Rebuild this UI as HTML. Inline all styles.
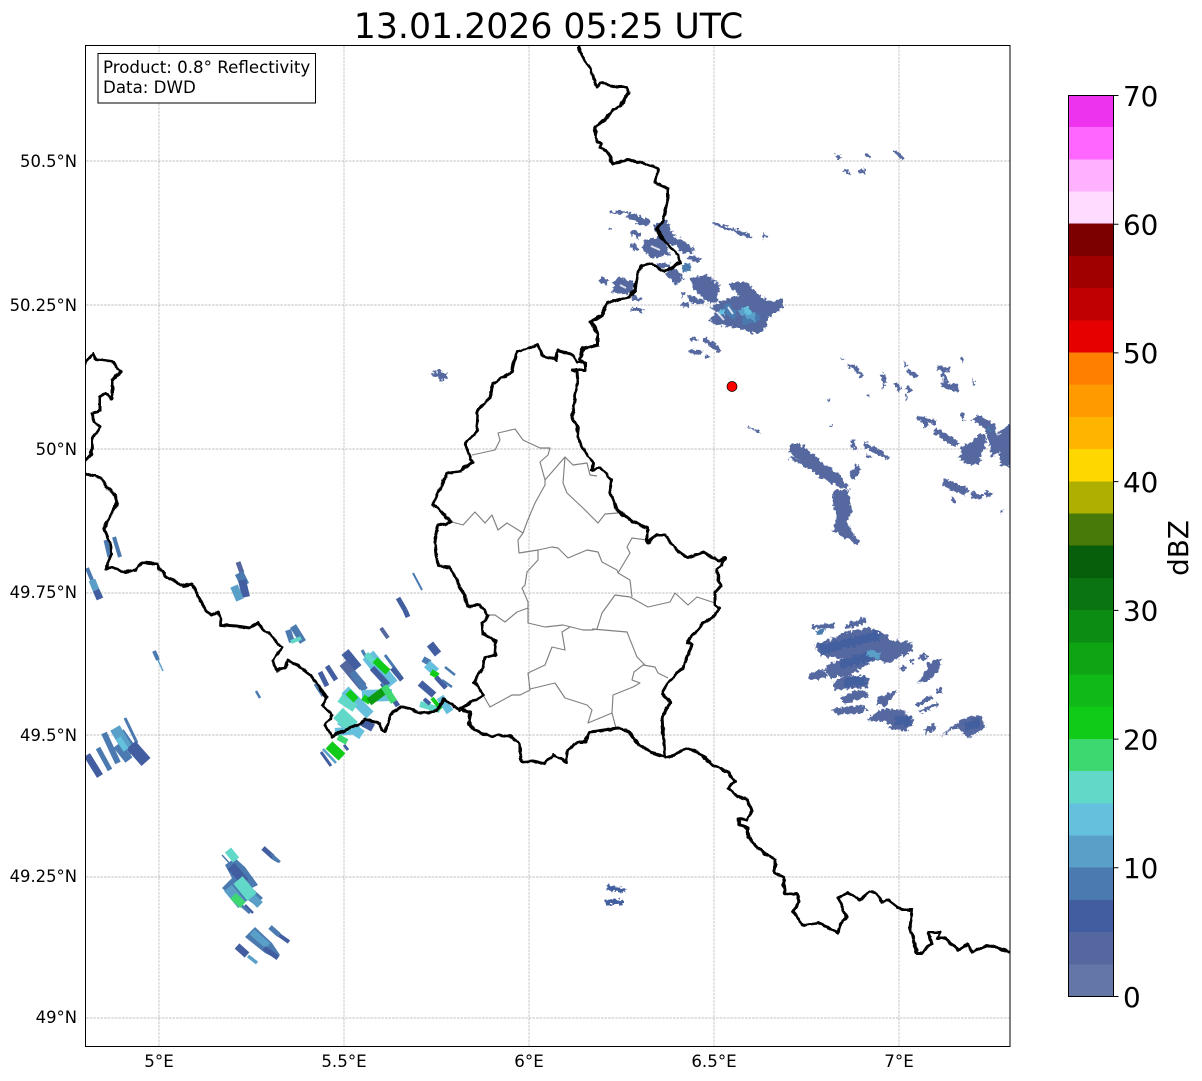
<!DOCTYPE html>
<html><head><meta charset="utf-8"><style>
html,body{margin:0;padding:0;background:#fff;width:1202px;height:1081px;overflow:hidden}
svg{display:block}
text{font-family:"DejaVu Sans",sans-serif;fill:#000}
.m{font-size:16.67px}
.y{font-size:16.4px}
.c{font-size:27.8px}
.r path{fill:none}
.p polygon{stroke:none}
</style></head><body>
<svg width="1202" height="1081" viewBox="0 0 1202 1081" xmlns="http://www.w3.org/2000/svg">
<defs>
<clipPath id="ax"><rect x="85.5" y="45.5" width="924.5" height="1001"/></clipPath>
<filter id="grain" filterUnits="userSpaceOnUse" x="0" y="0" width="1202" height="1081">
<feTurbulence type="fractalNoise" baseFrequency="0.3" numOctaves="2" seed="4" result="n"/>
<feDisplacementMap in="SourceGraphic" in2="n" scale="7" xChannelSelector="R" yChannelSelector="G"/>
</filter>
<filter id="wig" filterUnits="userSpaceOnUse" x="0" y="0" width="1202" height="1081">
<feTurbulence type="fractalNoise" baseFrequency="0.12" numOctaves="2" seed="7" result="n"/>
<feDisplacementMap in="SourceGraphic" in2="n" scale="4" xChannelSelector="R" yChannelSelector="G"/>
</filter>
</defs>
<rect width="1202" height="1081" fill="#fff"/>
<text x="548.5" y="38" text-anchor="middle" font-size="34.7">13.01.2026 05:25 UTC</text>

<g stroke="#b0b0b0" stroke-width=".7" stroke-dasharray="2.6 1" fill="none">
<path d="M159 46V1046M344 46V1046M529 46V1046M714 46V1046M899 46V1046M86 161H1010M86 305H1010M86 449H1010M86 593H1010M86 735H1010M86 877H1010M86 1018H1010"/>
</g>

<g clip-path="url(#ax)">

<!-- grainy eastern echoes -->
<g filter="url(#grain)">
<g class="p" fill="#54689f">
<polygon points="730,282 747,282 757,293 770,302 783,298 783,308 767,318 767,328 757,334 737,328 713,324 709,320 717,312 710,308 720,302 730,298 740,295 730,288"/>
<polygon points="690,278 707,275 720,285 717,302 707,302 693,288"/>
<polygon points="653,225 667,220 673,235 693,247 695,252 687,253 680,253 678,245 667,245 670,255 650,258 642,248 645,240 658,237"/>
<polygon points="612,282 620,277 633,282 635,293 628,293 615,292"/>
<polygon points="833,490 848,490 852,510 847,523 853,532 852,538 843,538 833,530 837,517 833,507"/>
<polygon points="790,445 800,443 823,463 840,475 850,490 835,485 820,477 790,453"/>
<polygon points="990,422 995,425 997,450 992,457 988,437 983,427 972,420 978,415"/>
<polygon points="992,437 1012,423 1012,467 1000,465 1000,453 992,457"/>
<polygon points="958,457 967,445 982,433 987,440 978,465 967,465"/>
<polygon points="815,645 833,638 845,632 870,628 887,635 888,640 912,642 913,650 890,663 870,660 843,658 828,658 818,652"/>
<polygon points="827,665 847,658 870,663 850,675 830,678 825,672"/>
<polygon points="808,675 823,668 827,678 810,680"/>
<polygon points="833,683 845,675 870,678 867,687 835,690"/>
<polygon points="840,698 858,690 868,692 868,697 845,704"/>
<polygon points="878,697 898,690 885,707 878,705"/>
<polygon points="830,710 858,705 868,708 863,713 840,715"/>
<polygon points="867,720 883,708 902,710 915,720 907,730 892,730 887,722"/>
<polygon points="940,737 963,718 980,715 986,727 968,738 958,727"/>
<polygon points="917,683 928,670 927,663 942,658 938,672 930,680"/>
</g>
<g class="r">
<g stroke="#54689f">
<path stroke-width="3" d="M610 213L627 212M609 228L612 228M712 223L750 236M742 233L752 238M836 156L842 158M866 155L870 157M895 151L904 160M845 170L850 175M858 172L866 171"/>
<path stroke-width="7" d="M627 215L650 224"/>
<path stroke-width="5" d="M632 232L640 236M632 245L637 250M600 279L608 283M632 297L641 300M762 238L766 235"/>
<path stroke-width="4" d="M688 257L700 260M632 308L643 311M680 304L688 305M682 294L685 295M690 351L702 353"/>
<path stroke-width="5" d="M657 266L670 266"/>
<path stroke-width="11" d="M670 270L680 282"/>
<path stroke-width="6" d="M613 290L628 292M688 298L703 303"/>
<path stroke-width="3" d="M690 338L698 341M706 356L709 358"/>
<path stroke-width="5" d="M704 339L720 351"/>
<path stroke-width="2.5" d="M841 358L845 361M848 365L852 367M867 395L869 396M828 400L830 401M829 425L832 426"/>
<path stroke-width="4" d="M853 365L862 377M882 373L885 383M895 383L900 390M907 387L910 392M907 370L917 377M937 367L950 370M943 370L946 383M917 418L936 422M852 440L855 450M966 445L962 453"/>
<path stroke-width="6" d="M942 385L958 388"/>
<path stroke-width="2" d="M962 357L963 363M972 378L974 385M905 362L906 366M883 389L885 384M906 394L907 401M748 427L760 432"/>
<path stroke-width="5" d="M865 445L888 458M923 417L927 427M972 495L982 497M985 493L992 496"/>
<path stroke-width="3" d="M866 455L872 458M952 497L955 503M1001 510L1002 512"/>
<path stroke-width="7" d="M851 477L860 467"/>
<path stroke-width="3" d="M790 457L808 467"/>
<path stroke-width="5" d="M852 537L858 543"/>
<path stroke-width="6" d="M935 430L957 445"/>
<path stroke-width="4" d="M962 413L964 420"/>
<path stroke-width="8" d="M943 482L967 492"/>
<path stroke-width="4" d="M812 627L835 625M917 705L932 697M910 662L914 660M900 669L905 667"/>
<path stroke-width="5" d="M846 627L866 620M936 692L942 690M924 733L935 725"/>
<path stroke-width="3" d="M920 712L937 704"/>
<path stroke-width="6" d="M920 660L926 655"/>
</g>
<path stroke="#425ea0" stroke-width="9" d="M820 650L880 635M840 664L872 656M845 683L866 680M895 720L910 722M965 727L980 722"/>
<path stroke="#4a7ab0" stroke-width="8" d="M682 268L690 267M725 305L735 318M742 322L760 316"/>
<path stroke="#4a7ab0" stroke-width="4" d="M817 633L825 630M988 427L992 432"/>
<path stroke="#5a9fc8" stroke-width="7" d="M867 653L880 656M740 310L755 318"/>
<path stroke="#65c0de" stroke-width="5" d="M718 313L724 312M745 308L750 314"/>
<path stroke="#54689f" stroke-width="5" d="M433 374L447 376"/>
<path stroke="#54689f" stroke-width="4" d="M439 369L442 382"/>
<path stroke="#425ea0" stroke-width="5" d="M607 887L626 891M605 902L623 902"/>
</g>
</g>

<!-- white holes -->
<g stroke="#fff" stroke-width="2" fill="none" opacity=".8">
<path d="M717 312L724 320M728 307L733 314M651 246L660 250M620 285L626 288M655 232L659 236"/>
</g>

<g class="r" stroke-linecap="butt">
<!-- left strips -->
<path stroke="#4a7ab0" stroke-width="5" d="M106 540L110 557"/>
<path stroke="#4a7ab0" stroke-width="4" d="M114 537L120 557"/>
<path stroke="#4a7ab0" stroke-width="4" d="M87 568L92 580"/>
<path stroke="#5a9fc8" stroke-width="7" d="M92 580L96 590"/>
<path stroke="#425ea0" stroke-width="7" d="M96 590L100 599"/>
<path stroke="#54689f" stroke-width="5" d="M238 562L242 573"/>
<path stroke="#4a7ab0" stroke-width="9" d="M239 573L245 585"/>
<path stroke="#425ea0" stroke-width="8" d="M242 580L246 597"/>
<path stroke="#5a9fc8" stroke-width="8" d="M234 586L240 600"/>
<path stroke="#4a7ab0" stroke-width="6" d="M288 630L292 642"/>
<path stroke="#4a7ab0" stroke-width="7" d="M293 626L303 642"/>
<path stroke="#62d8c8" stroke-width="4" d="M291 642L301 638"/>
<path stroke="#4a7ab0" stroke-width="4" d="M154 651L158 660"/>
<path stroke="#5a9fc8" stroke-width="1.5" d="M158 660L163 671"/>
<path stroke="#4a7ab0" stroke-width="2.5" d="M256 691L260 698"/>
<path stroke="#4a7ab0" stroke-width="2" d="M413 573L422 590"/>
<path stroke="#425ea0" stroke-width="5" d="M398 598L405 610M405 610L408 617"/>
<path stroke="#54689f" stroke-width="4" d="M381 628L388 638"/>

<!-- SW cell -->
<path stroke="#4a7ab0" stroke-width="3" d="M125 718L137 743"/>
<path stroke="#4a7ab0" stroke-width="6" d="M104 733L118 763"/>
<path stroke="#4a7ab0" stroke-width="5" d="M98 748L110 770"/>
<path stroke="#425ea0" stroke-width="7" d="M87 755L100 776"/>
<path stroke="#4a7ab0" stroke-width="9" d="M120 732L134 752"/>
<path stroke="#5a9fc8" stroke-width="11" d="M115 728L128 750"/>
<path stroke="#425ea0" stroke-width="12" d="M131 745L146 762"/>
<path stroke="#4a7ab0" stroke-width="9" d="M117 745L129 760"/>
<path stroke="#65c0de" stroke-width="6" d="M118 738L126 750"/>

<!-- Central cluster -->
<path stroke="#425ea0" stroke-width="9" d="M345 652L358 668"/>
<path stroke="#54689f" stroke-width="9" d="M343 663L363 687"/>
<path stroke="#4a7ab0" stroke-width="7" d="M352 672L365 690"/>
<path stroke="#4a7ab0" stroke-width="3" d="M362 650L372 668M385 655L402 678"/>
<path stroke="#425ea0" stroke-width="5" d="M382 683L398 706M392 668L402 680"/>
<path stroke="#65c0de" stroke-width="14" d="M368 655L392 685"/>
<path stroke="#62d8c8" stroke-width="6" d="M366 654L376 664"/>
<path stroke="#425ea0" stroke-width="6" d="M372 668L388 685"/>
<path stroke="#10cc18" stroke-width="7" d="M375 660L388 672"/>
<path stroke="#425ea0" stroke-width="5" d="M320 672L327 686M327 666L336 680"/>
<path stroke="#4a7ab0" stroke-width="3" d="M315 684L323 696"/>
<path stroke="#65c0de" stroke-width="10" d="M345 690L370 715"/>
<path stroke="#65c0de" stroke-width="12" d="M362 696L392 695"/>
<path stroke="#62d8c8" stroke-width="9" d="M340 698L355 708"/>
<path stroke="#10cc18" stroke-width="7" d="M348 692L356 700"/>
<path stroke="#10cc18" stroke-width="6" d="M363 697L370 702"/>
<path stroke="#0c9c12" stroke-width="8" d="M369 702L385 690"/>
<path stroke="#3dd86f" stroke-width="7" d="M384 686L394 702"/>
<path stroke="#65c0de" stroke-width="10" d="M340 720L362 735"/>
<path stroke="#65c0de" stroke-width="8" d="M335 732L360 730"/>
<path stroke="#62d8c8" stroke-width="14" d="M338 713L353 727"/>
<path stroke="#425ea0" stroke-width="8" d="M362 722L373 728"/>
<path stroke="#3dd86f" stroke-width="6" d="M338 737L347 742"/>
<path stroke="#10cc18" stroke-width="10" d="M329 745L342 757"/>
<path stroke="#425ea0" stroke-width="3" d="M344 745L348 750M321 752L331 766"/>
<path stroke="#5a9fc8" stroke-width="2.5" d="M323 749L336 763"/>
<path stroke="#425ea0" stroke-width="8" d="M430 644L438 654"/>
<path stroke="#4a7ab0" stroke-width="6" d="M423 659L430 663"/>
<path stroke="#65c0de" stroke-width="9" d="M427 664L436 672"/>
<path stroke="#10cc18" stroke-width="6" d="M431 672L438 676"/>
<path stroke="#425ea0" stroke-width="5" d="M436 677L446 688"/>
<path stroke="#4a7ab0" stroke-width="2.5" d="M445 667L455 675M442 680L452 687"/>
<path stroke="#425ea0" stroke-width="7" d="M420 683L434 695"/>
<path stroke="#65c0de" stroke-width="8" d="M440 697L450 712"/>
<path stroke="#62d8c8" stroke-width="6" d="M420 704L440 710"/>
<path stroke="#10cc18" stroke-width="4" d="M432 698L441 709"/>
<path stroke="#425ea0" stroke-width="4" d="M424 699L430 704"/>

<!-- South cells -->
<polygon points="225,865 235,858 245,867 258,885 252,888 263,898 255,905 248,900 240,905 232,898 222,888 232,878" fill="#4a7ab0" stroke="none"/>
<path stroke="#62d8c8" stroke-width="8" d="M228 850L236 860"/>
<path stroke="#4a7ab0" stroke-width="1.5" d="M222 855L232 866"/>
<path stroke="#425ea0" stroke-width="9" d="M231 866L245 882"/>
<path stroke="#5a9fc8" stroke-width="10" d="M228 888L242 905"/>
<path stroke="#5a9fc8" stroke-width="8" d="M250 895L260 905"/>
<path stroke="#62d8c8" stroke-width="12" d="M238 880L252 897"/>
<path stroke="#3dd86f" stroke-width="8" d="M233 896L243 905"/>
<path stroke="#425ea0" stroke-width="2.5" d="M245 905L253 913"/>
<path stroke="#4a7ab0" stroke-width="3" d="M242 906L250 913"/>
<path stroke="#425ea0" stroke-width="5" d="M263 848L273 857"/>
<path stroke="#4a7ab0" stroke-width="2.5" d="M271 854L280 862M272 858L279 862"/>
<polygon points="245,937 255,927 272,943 280,955 275,958 265,953" fill="#4a7ab0" stroke="none"/>
<path stroke="#5a9fc8" stroke-width="7" d="M252 932L268 946"/>
<path stroke="#425ea0" stroke-width="5" d="M264 948L278 958"/>
<path stroke="#4a7ab0" stroke-width="5" d="M270 927L279 935"/>
<path stroke="#425ea0" stroke-width="4" d="M279 935L289 942"/>
<path stroke="#425ea0" stroke-width="7" d="M237 946L247 955"/>
<path stroke="#5a9fc8" stroke-width="3.5" d="M248 956L257 963"/>
</g>

<!-- Luxembourg internal -->
<g fill="none" stroke="#808080" stroke-width="1.15" stroke-linejoin="round">
<path d="M472 455L495 450L500 440L498 433L515 429L523 440L540 448L550 448L548 455L540 462L545 480L545 485L535 503L527 522L523 533"/>
<path d="M452 522L463 525L475 512L485 523L492 515L498 530L507 523L523 533L518 540L519 553L538 550L552 547L558 548L568 558L587 550L598 552L602 562L617 570L618 573L630 580L632 597"/>
<path d="M545 480L565 457L563 483L567 493L583 508L598 523L605 514L618 513"/>
<path d="M565 457L573 465L587 463L590 475L597 476"/>
<path d="M618 573L630 553L627 547L632 538L647 540"/>
<path d="M538 550L538 560L527 572L525 585L522 588L528 602L528 623L545 627L563 625L583 630L592 630L597 629L602 613L615 595L630 597L648 607L670 602L675 593L688 605L697 597L715 603"/>
<path d="M483 695L490 707L512 695L520 695L530 690L528 673L545 665L552 647L565 650L562 632L570 627"/>
<path d="M528 608L517 612L505 622L495 615L488 615"/>
<path d="M530 689L555 683L565 698L587 705L592 710L588 723L612 713L616 728"/>
<path d="M612 713L613 695L633 687L640 683L632 680L634 672L643 665L655 667L658 673L668 678"/>
<path d="M592 629L627 632L637 657L645 665"/>
</g>

<!-- Country borders -->
<g filter="url(#wig)">
<g fill="none" stroke="#000" stroke-width="3" stroke-linejoin="round" stroke-linecap="round">
<path d="M86 363L93 353L97 360L112 362L121 371L112 380L112 398L105 393L100 397L100 410L92 413L95 422L100 427L93 437L91 455L86 460"/>
<path d="M86 474L101 478L107 488L115 495L117 503L113 513L104 528L110 543L112 553L106 568L111 568L125 572L135 570L142 563L157 564L165 576L184 586L192 584L205 610L212 615L218 612L221 625L237 626L250 628L258 623L282 647L273 660L276 671L285 668L287 661L303 668L317 683L327 698L322 705L332 715L325 725L332 737L345 730L358 725L365 719L377 722L385 732L390 715L402 706L420 713L437 711L443 700L460 710"/>
<path d="M462 708L483 695L474 682L483 668L485 657L495 655L496 642L483 633L482 623L488 615L480 605L467 606L465 597L450 567L438 566L435 542L438 525L452 522L433 505L447 473L460 471L472 462L465 443L477 432L478 410L490 398L493 383L512 372L517 352L538 345L542 355L556 360L558 350L573 355L577 363L585 363L585 370L572 370L577 372L578 383L575 397L572 417L577 425L578 437L585 453L593 463L592 470L600 468L612 480L610 492L617 510L633 522L647 528L647 543L657 535L665 535L677 550L688 558L703 552L712 558L720 560L725 558L722 565L717 570L720 585L715 593L715 605L720 608L715 615L703 623L687 642L692 645L683 668L670 680L662 693L670 702L662 717L665 757"/>
<path d="M460 708L470 712L468 723L480 733L492 737L498 735L510 736L519 743L522 762L533 761L545 764L553 755L566 762L568 750L577 742L585 742L590 732L618 728L630 732L638 745L653 753L665 757L673 755L687 748L702 755L713 765L727 772L735 781L728 788L738 797L747 800L752 810L747 820L738 818L740 825L748 828L748 837L758 848L775 860L775 873L783 877L785 895L797 894L799 902L793 912L803 925L818 923L838 932L842 920L847 917L838 898L847 893L860 900L870 892L876 893L882 902L888 900L902 910L912 910L910 928L917 953L923 953L927 947L932 945L929 932L940 932L937 938L945 938L958 950L967 944L973 952L988 945L1003 950L1010 952"/>
<path d="M578 47L583 57L590 68L593 77L596 87L600 83L617 87L627 87L629 92L620 107L612 110L605 120L595 127L597 142L602 143L600 147L607 152L613 163L628 160L642 162L658 169L655 183L668 188L668 198L665 212L663 220L657 230L665 242L678 255L680 263L663 272L652 263L642 265L638 272L635 290L628 297L607 303L602 315L591 322L598 335L598 345L583 348L580 360L585 363"/>
</g>
</g>

<circle cx="732" cy="386.5" r="5" fill="#f00" stroke="#000" stroke-width=".7"/>
</g>

<rect x="85.5" y="45.5" width="924.5" height="1001" fill="none" stroke="#000" stroke-width="1"/>

<rect x="98" y="53.5" width="217.5" height="49.5" fill="#fff" stroke="#000" stroke-width="1"/>
<text class="m" x="103" y="73">Product: 0.8° Reflectivity</text>
<text class="m" x="103" y="93">Data: DWD</text>

<g text-anchor="end">
<text class="y" x="77" y="167">50.5°N</text>
<text class="y" x="77" y="311">50.25°N</text>
<text class="y" x="77" y="455">50°N</text>
<text class="y" x="77" y="598">49.75°N</text>
<text class="y" x="77" y="741">49.5°N</text>
<text class="y" x="77" y="882">49.25°N</text>
<text class="y" x="77" y="1023">49°N</text>
</g>
<g text-anchor="middle">
<text class="m" x="159" y="1067">5°E</text>
<text class="m" x="344" y="1067">5.5°E</text>
<text class="m" x="529" y="1067">6°E</text>
<text class="m" x="714" y="1067">6.5°E</text>
<text class="m" x="899" y="1067">7°E</text>
</g>

<!-- colorbar -->
<g shape-rendering="crispEdges">
<rect x="1068" y="963.8" width="45.5" height="32.7" fill="#6475a8"/>
<rect x="1068" y="931.6" width="45.5" height="32.7" fill="#54689f"/>
<rect x="1068" y="899.4" width="45.5" height="32.7" fill="#425ea0"/>
<rect x="1068" y="867.2" width="45.5" height="32.7" fill="#4a7ab0"/>
<rect x="1068" y="835" width="45.5" height="32.7" fill="#5a9fc8"/>
<rect x="1068" y="802.8" width="45.5" height="32.7" fill="#65c0de"/>
<rect x="1068" y="770.6" width="45.5" height="32.7" fill="#62d8c8"/>
<rect x="1068" y="738.4" width="45.5" height="32.7" fill="#3dd86f"/>
<rect x="1068" y="706.2" width="45.5" height="32.7" fill="#10cc18"/>
<rect x="1068" y="674" width="45.5" height="32.7" fill="#10b818"/>
<rect x="1068" y="641.8" width="45.5" height="32.7" fill="#0ea414"/>
<rect x="1068" y="609.6" width="45.5" height="32.7" fill="#0c8c12"/>
<rect x="1068" y="577.4" width="45.5" height="32.7" fill="#0a7410"/>
<rect x="1068" y="545.2" width="45.5" height="32.7" fill="#075f0c"/>
<rect x="1068" y="513" width="45.5" height="32.7" fill="#477a08"/>
<rect x="1068" y="480.8" width="45.5" height="32.7" fill="#adb000"/>
<rect x="1068" y="448.6" width="45.5" height="32.7" fill="#ffd700"/>
<rect x="1068" y="416.4" width="45.5" height="32.7" fill="#ffb400"/>
<rect x="1068" y="384.2" width="45.5" height="32.7" fill="#ff9a00"/>
<rect x="1068" y="352" width="45.5" height="32.7" fill="#ff7f00"/>
<rect x="1068" y="319.8" width="45.5" height="32.7" fill="#e60000"/>
<rect x="1068" y="287.6" width="45.5" height="32.7" fill="#c00000"/>
<rect x="1068" y="255.4" width="45.5" height="32.7" fill="#a00000"/>
<rect x="1068" y="223.2" width="45.5" height="32.7" fill="#7d0000"/>
<rect x="1068" y="191" width="45.5" height="32.7" fill="#ffdcff"/>
<rect x="1068" y="158.8" width="45.5" height="32.7" fill="#ffb0ff"/>
<rect x="1068" y="126.6" width="45.5" height="32.7" fill="#ff66ff"/>
<rect x="1068" y="95.5" width="45.5" height="31.6" fill="#ee33ee"/>
</g>
<rect x="1068.5" y="95.5" width="45" height="901" fill="none" stroke="#000" stroke-width="1"/>
<path d="M1113.5 95.5h5M1113.5 224.2h5M1113.5 352.9h5M1113.5 481.6h5M1113.5 610.4h5M1113.5 739.1h5M1113.5 867.8h5M1113.5 996.5h5" stroke="#000" stroke-width="1"/>
<text class="c" x="1123" y="106">70</text>
<text class="c" x="1123" y="234.5">60</text>
<text class="c" x="1123" y="363">50</text>
<text class="c" x="1123" y="492">40</text>
<text class="c" x="1123" y="620.5">30</text>
<text class="c" x="1123" y="749.5">20</text>
<text class="c" x="1123" y="878">10</text>
<text class="c" x="1123" y="1007">0</text>
<text class="c" text-anchor="middle" transform="translate(1188 548) rotate(-90)">dBZ</text>
</svg>
</body></html>
